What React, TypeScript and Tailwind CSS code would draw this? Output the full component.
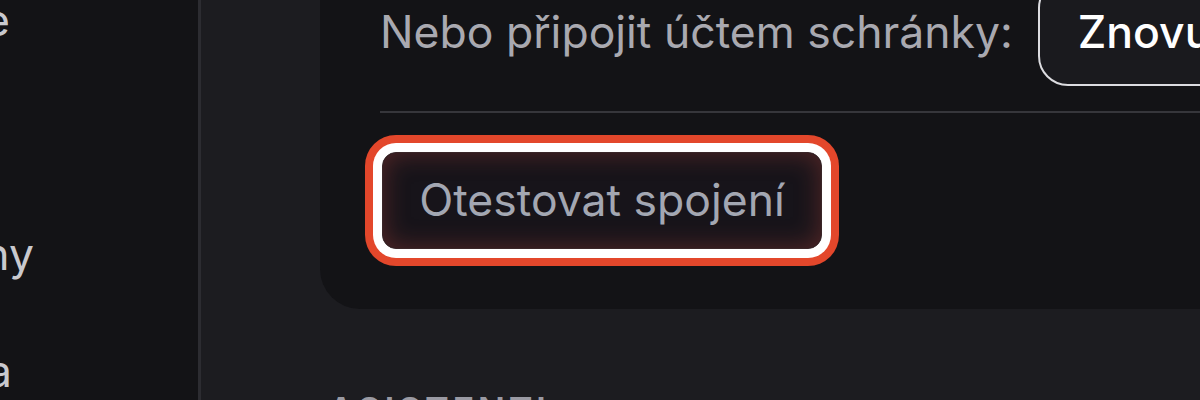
import React from "react";

const SideItem = ({ label, end }: { label: string; end: string }) => (
  <div className="h-[117px] flex items-center">
    <div className={`flex justify-end whitespace-nowrap ${end}`}>
      <span>{label}</span>
    </div>
  </div>
);

export default function App() {
  return (
    <div className="flex h-[400px] w-[1200px] overflow-hidden bg-[#1c1c20] font-['Inter',sans-serif] text-[44.5px]">
      {/* sidebar, scrolled off to the left */}
      <aside className="w-[201px] shrink-0 overflow-hidden border-r-[3px] border-[#2c2c31] bg-[#131316] text-[#c9c9ce]">
        <div className="-mt-[38px] flex flex-col">
          <SideItem label="Aplikace" end="w-[10px]" />
          <SideItem label="Podpisy" end="w-0 -ml-[14px]" />
          <SideItem label="Šablony" end="w-[34px]" />
          <SideItem label="Pravidla" end="w-[12px]" />
        </div>
      </aside>

      <main className="flex-1 overflow-hidden pl-[119px]">
        <section className="-mt-[61px] w-[1000px] rounded-[40px] bg-[#131316] px-[60px] pt-[39px] pb-[60px]">
          <div className="flex h-[108px] items-center gap-[25px]">
            <span className="whitespace-nowrap text-[#a9a9b0]">Nebo připojit účtem schránky:</span>
            <button className="flex h-[108px] shrink-0 items-center rounded-[30px] border-2 border-[#dcdce0] bg-[#1a1a1e] px-[38px] font-medium text-white">
              Znovu připojit
            </button>
          </div>
          <div className="mt-[25px] h-[2px] bg-[#36363b]" />
          <button className="mt-[39px] ml-[2px] flex h-[97px] w-[440px] items-center justify-center rounded-[14px] border border-[#3a2628] bg-[#17141a] text-[#a3a7b2] shadow-[inset_0_0_26px_rgba(190,70,60,0.38),0_0_0_9px_#ffffff,0_0_0_17px_#e3472b]">
            Otestovat spojení
          </button>
        </section>
        <h2 className="mt-[74px] ml-[8px] text-[36px] font-semibold uppercase tracking-[0.1em] text-[#9a9aa3]">
          Asistenti
        </h2>
      </main>
    </div>
  );
}
